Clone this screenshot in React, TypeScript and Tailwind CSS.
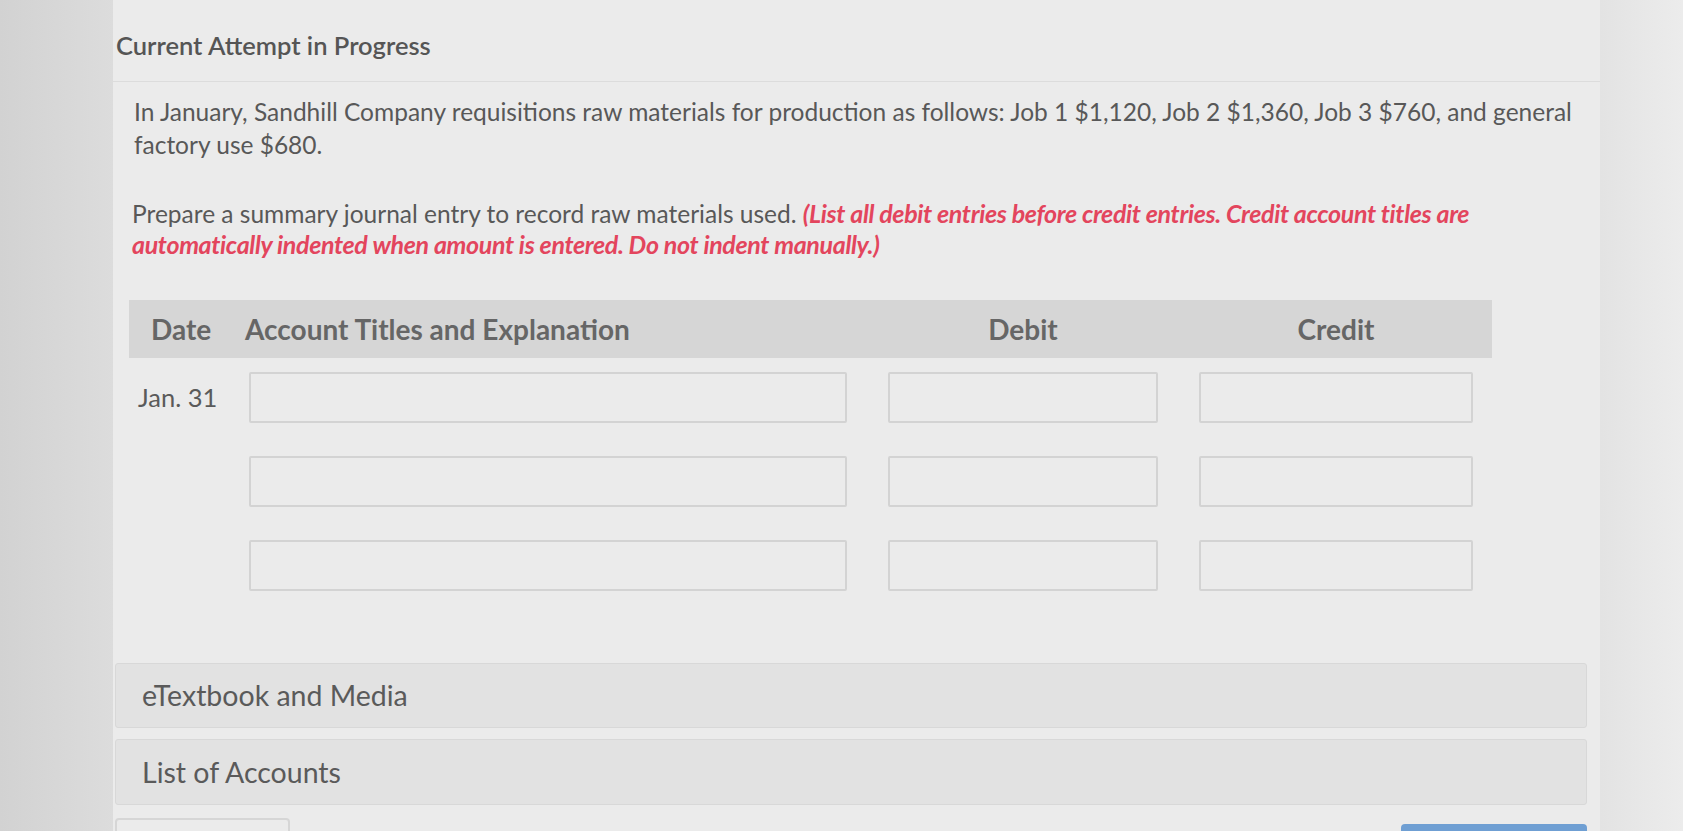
const rows = [0, 1, 2];

const AmountBox = () => (
  <div className="h-[51px] w-full rounded-[2px] border-2 border-[#d3d3d3] bg-[#ebebeb]" />
);

export default function App() {
  return (
    <div className="flex h-[831px] w-full overflow-hidden bg-[#e7e7e7] font-['Lato','Open_Sans',sans-serif] text-[#555]">
      <div className="w-[113px] shrink-0 bg-gradient-to-r from-[#d2d2d2] to-[#dcdcdc]" />

      <main className="w-[1487px] shrink-0 bg-[#ebebeb] pt-[29px]">
        <h2 className="pl-[3px] text-[25.5px] leading-[32px] font-semibold text-[#555]">
          Current Attempt in Progress
        </h2>
        <div className="mt-[20px] h-px w-full bg-[#dcdcdc]" />

        <div className="pl-[21px] pt-[13px] text-[24.5px] leading-[33px] text-[#585858]">
          <p className="whitespace-nowrap">
            In January, Sandhill Company requisitions raw materials for production as follows: Job 1 $1,120, Job 2 $1,360,
            Job 3 $760, and general
            <br />
            factory use $680.
          </p>
          <p className="-ml-[2px] mt-[37px] whitespace-nowrap leading-[31px]">
            Prepare a summary journal entry to record raw materials used.{" "}
            <span className="text-[25px] font-bold italic tracking-[-0.35px] text-[#e3455d]">
              (List all debit entries before credit entries. Credit account titles are
              <br />
              automatically indented when amount is entered. Do not indent manually.)
            </span>
          </p>
        </div>

        <section className="ml-[16px] mt-[40px] w-[1363px]">
          <div className="grid h-[58px] grid-cols-[79px_598px_270px_274px] items-center gap-x-[41px] whitespace-nowrap bg-[#d6d6d6] text-[28px] font-bold text-[#666]">
            <div className="pl-[22px]">Date</div>
            <div className="-ml-[4px]">Account Titles and Explanation</div>
            <div className="text-center">Debit</div>
            <div className="text-center">Credit</div>
          </div>

          <div className="mt-[14px] flex flex-col gap-[33px]">
            {rows.map((r) => (
              <div key={r} className="grid grid-cols-[79px_598px_270px_274px] items-center gap-x-[41px]">
                <div className="whitespace-nowrap pl-[9px] text-[25.5px] text-[#5a5a5a]">{r === 0 ? "Jan. 31" : ""}</div>
                <AmountBox />
                <AmountBox />
                <AmountBox />
              </div>
            ))}
          </div>
        </section>

        <div className="ml-[2px] mt-[72px] flex w-[1472px] flex-col gap-[11px]">
          <div className="flex h-[65px] items-center rounded-[3px] border border-[#d8d8d8] bg-[#e2e2e2] pl-[26px] text-[28.5px] text-[#5a5a5a]">
            eTextbook and Media
          </div>
          <div className="flex h-[66px] items-center rounded-[3px] border border-[#d8d8d8] bg-[#e2e2e2] pl-[26px] text-[28.5px] text-[#5a5a5a]">
            List of Accounts
          </div>
          <div className="mt-[2px] flex items-start justify-between">
            <div className="h-[40px] w-[175px] rounded-t-[4px] border-2 border-[#d6d6d6] bg-[#ebebeb]" />
            <div className="mt-[6px] h-[40px] w-[186px] rounded-t-[4px] bg-[#6f9fd3]" />
          </div>
        </div>
      </main>

      <div className="flex-1 bg-gradient-to-r from-[#e3e3e3] to-[#ececec]" />
    </div>
  );
}
